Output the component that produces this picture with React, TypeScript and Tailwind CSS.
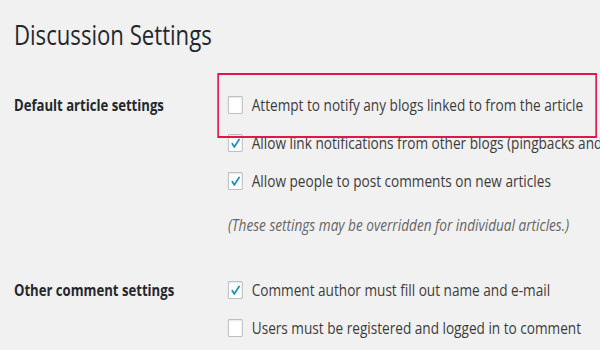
import React from "react";

function Check() {
  return (
    <svg viewBox="0 0 20 20" className="w-[15px] h-[15px]">
      <path d="M4.2 10.2 L7.6 14.6 L15.6 4.6" fill="none" stroke="#1e8cbe" strokeWidth="2.6" strokeLinecap="round" strokeLinejoin="round" />
    </svg>
  );
}

function Box({ checked }: { checked?: boolean }) {
  return (
    <span className="flex items-center justify-center w-[18px] h-[18px] shrink-0 bg-white border border-[#b4b9be] rounded-[1px] shadow-[inset_0_1px_2px_rgba(0,0,0,0.1)]">
      {checked ? <Check /> : null}
    </span>
  );
}

function Row({ checked, children }: { checked?: boolean; children: React.ReactNode }) {
  return (
    <div className="flex items-center gap-[11px] h-[38px] leading-[38px] whitespace-nowrap">
      <Box checked={checked} />
      <span>{children}</span>
    </div>
  );
}

export default function App() {
  return (
    <div className="w-[600px] h-[350px] overflow-hidden bg-[#f1f1f1]">
      <div className="relative w-[732px] h-[350px] origin-top-left scale-x-[0.82] font-['Open_Sans',sans-serif] text-[#3c3c3c] pl-[17px] pt-[19px]">
        <h1 className="text-[27px] leading-[32px] text-[#23282d] font-normal">Discussion Settings</h1>

        <div className="flex mt-[35px]">
          <div className="w-[261px] shrink-0 text-[16px] font-bold text-[#23282d] leading-[38px]">Default article settings</div>
          <div className="flex flex-col text-[16.6px]">
            <Row>Attempt to notify any blogs linked to from the article</Row>
            <Row checked>Allow link notifications from other blogs (pingbacks and trackbacks) on new articles</Row>
            <Row checked>Allow people to post comments on new articles</Row>
            <div className="mt-[6px] h-[38px] leading-[38px] italic text-[#666] whitespace-nowrap">
              (These settings may be overridden for individual articles.)
            </div>
          </div>
        </div>

        <div className="flex mt-[27px]">
          <div className="w-[261px] shrink-0 text-[16px] font-bold text-[#23282d] leading-[38px]">Other comment settings</div>
          <div className="flex flex-col text-[16.6px]">
            <Row checked>Comment author must fill out name and e-mail</Row>
            <Row>Users must be registered and logged in to comment</Row>
          </div>
        </div>

        <div className="absolute left-[265px] top-[73px] w-[463px] h-[65px] border-2 border-[#e0174b]" />
      </div>
    </div>
  );
}
